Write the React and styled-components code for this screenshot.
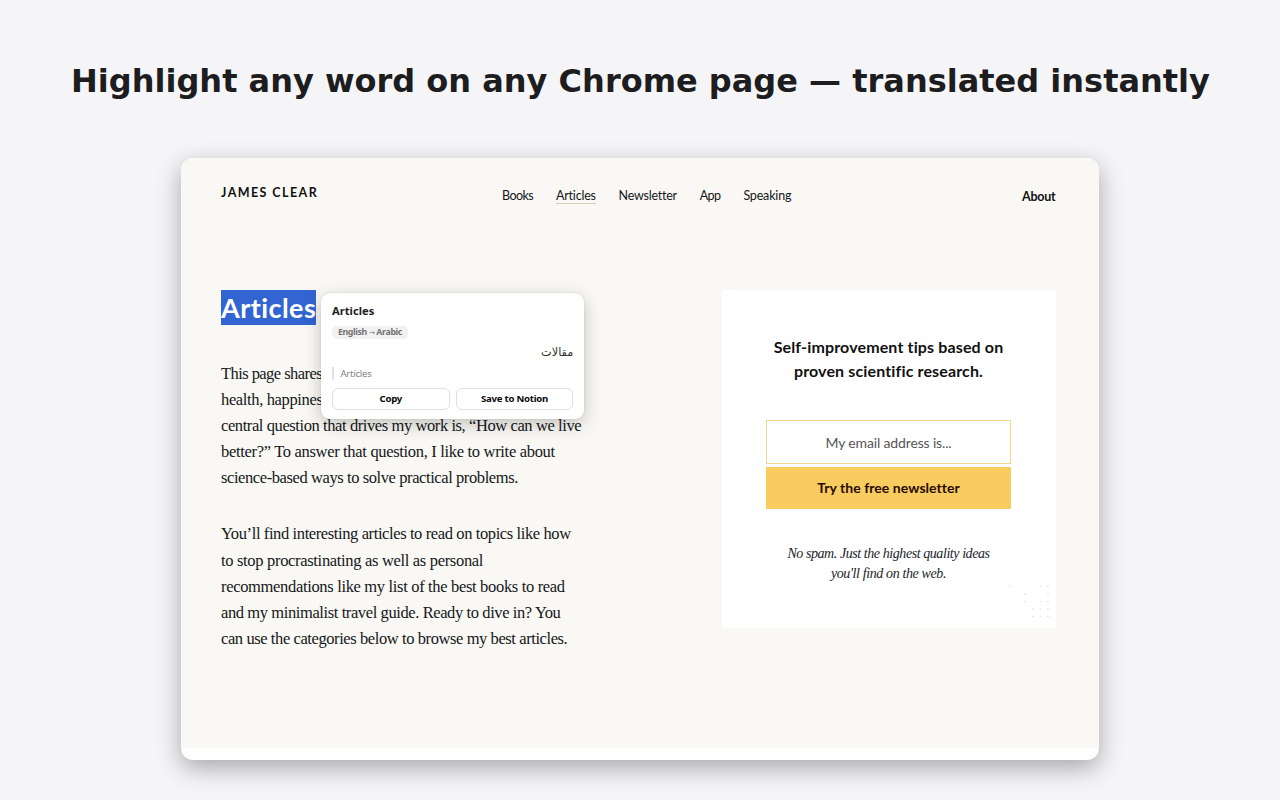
import React from "react";
import styled, { createGlobalStyle } from "styled-components";

const sans = `Lato, "Open Sans", sans-serif`;
const serif = `"Liberation Serif", serif`;
const ui = `"Noto Sans", "DejaVu Sans", sans-serif`;

const GlobalStyle = createGlobalStyle`
  * { box-sizing: border-box; }
  body { margin: 0; background: #f5f5f8; }
  h1, h2, p { margin: 0; }
`;

const Page = styled.main`
  height: 800px;
  overflow: hidden;
  display: flex;
  flex-direction: column;
  align-items: center;
`;

const Headline = styled.h1`
  height: 158px;
  padding: 63px 0 0 1px;
  font: 700 32px/37px "DejaVu Sans", sans-serif;
  color: #1d1d1f;
  white-space: nowrap;
`;

const Window = styled.section`
  width: 918px;
  height: 602px;
  flex: none;
  display: flex;
  flex-direction: column;
  border-radius: 12px;
  overflow: hidden;
  background: #fff;
  box-shadow: 0 8px 24px rgba(0, 0, 0, 0.32);
`;

const Site = styled.div`
  height: 590px;
  padding: 0 43px 0 40px;
  background: #f9f8f4;
  color: #15171a;
`;

const Header = styled.header`
  height: 132px;
  padding-top: 26px;
  display: grid;
  grid-template-columns: 281px 1fr auto;
  align-items: start;
  font-family: ${sans};
`;

const Logo = styled.div`
  font-size: 12.5px;
  line-height: 18px;
  font-weight: 700;
  letter-spacing: 1.42px;
  color: #111;
`;

const Nav = styled.nav`
  display: flex;
  gap: 22.8px;
  padding-top: 3px;
`;

const NavLink = styled.a`
  height: 16px;
  font-size: 12.5px;
  line-height: 18px;
  letter-spacing: ${(p) => p.$spacing}px;
  box-shadow: ${(p) => (p.$active ? "0 1px 0 #cfcebd" : "none")};
`;

const About = styled.a`
  padding: 4px 0.5px 0 0;
  font-size: 12.5px;
  line-height: 18px;
  font-weight: 700;
  letter-spacing: -0.25px;
  color: #111;
`;

const Columns = styled.div`
  display: flex;
  justify-content: space-between;
  align-items: flex-start;
`;

const Article = styled.article`
  position: relative;
  width: 370px;
`;

const Title = styled.h2`
  width: fit-content;
  height: 35px;
  margin-bottom: 35.6px;
  font: 700 27px/35px ${sans};
  letter-spacing: 0.45px;
  color: #fff;
  background: #3265d2;
`;

const Paragraph = styled.p`
  margin-bottom: 30px;
  font: 400 16.5px/26.15px ${serif};
`;

const Line = styled.span`
  display: block;
  white-space: nowrap;
  letter-spacing: ${(p) => p.$spacing}px;
`;

const Popup = styled.aside`
  position: absolute;
  top: 3px;
  left: 100.4px;
  width: 262.5px;
  height: 125.5px;
  padding: 9px 10.5px 9px 10.6px;
  border-radius: 9px;
  background: #fff;
  box-shadow: 0 5px 18px rgba(0, 0, 0, 0.22), 0 0 2px rgba(0, 0, 0, 0.12);
  font-family: ${ui};
`;

const Word = styled.div`
  height: 24px;
  font-size: 11.2px;
  line-height: 17px;
  font-weight: 700;
  color: #1d1d1f;
`;

const Chip = styled.div`
  width: 76px;
  height: 13px;
  border-radius: 5px;
  background: #f1f1f2;
  color: #747474;
  font-size: 8.8px;
  line-height: 13px;
  font-weight: 700;
  letter-spacing: -0.36px;
  text-align: center;
  white-space: nowrap;
`;

const Arrow = styled.span`
  font-size: 7px;
  font-family: "DejaVu Sans", sans-serif;
  font-weight: 400;
`;

const Translation = styled.div`
  height: 28px;
  font: 400 11.3px/27px "DejaVu Sans", sans-serif;
  color: #333;
`;

const Quote = styled.div`
  height: 13px;
  margin-bottom: 8px;
  padding-left: 6.4px;
  border-left: 2px solid #e1e1e4;
  font-size: 9.6px;
  line-height: 13px;
  letter-spacing: -0.25px;
  color: #858585;
`;

const Actions = styled.div`
  display: grid;
  grid-template-columns: 1fr 1fr;
  gap: 6px;
`;

const Action = styled.button`
  height: 21.5px;
  padding: 0;
  border: 1px solid #e0e0e3;
  border-radius: 6px;
  background: #fff;
  font: 700 9.6px/19px ${ui};
  letter-spacing: -0.25px;
  color: #080808;
`;

const Signup = styled.form`
  width: 334px;
  height: 338px;
  position: relative;
  display: flex;
  flex-direction: column;
  align-items: center;
  padding: 45px 1px 0 0;
  border-radius: 3px;
  background: #fff;
  text-align: center;
`;

const SignupTitle = styled.h2`
  height: 85px;
  font: 700 16px/24px ${sans};
  letter-spacing: 0.14px;
  color: #111;
`;

const EmailInput = styled.input`
  width: 245px;
  height: 44px;
  margin-bottom: 3px;
  padding: 1px 0 0;
  border: 1px solid #f8d68a;
  border-radius: 0;
  background: #fff;
  font: 400 14px/20px ${sans};
  letter-spacing: -0.15px;
  text-align: center;
  &::placeholder { color: #565656; opacity: 1; }
`;

const Submit = styled.button`
  width: 245px;
  height: 42px;
  padding: 0;
  border: 0;
  background: #f8cc5e;
  font: 700 14px/40px ${sans};
  letter-spacing: 0.05px;
  color: #280a00;
`;

const Note = styled.p`
  margin-top: 34.6px;
  font: italic 400 14px/20.5px ${serif};
  color: #22242a;
`;

const Dots = styled.svg`
  position: absolute;
  right: 0;
  bottom: 0;
`;

const nav = [
  ["Books", -0.55],
  ["Articles", -0.2],
  ["Newsletter", -0.24],
  ["App", -0.5],
  ["Speaking", -0.18],
];

const paragraphs = [
  [
    ["This page shares", -0.56],
    ["health, happiness", -0.36],
    ["central question that drives my work is, “How can we live", -0.41],
    ["better?” To answer that question, I like to write about", -0.32],
    ["science-based ways to solve practical problems.", -0.41],
  ],
  [
    ["You’ll find interesting articles to read on topics like how", -0.39],
    ["to stop procrastinating as well as personal", -0.32],
    ["recommendations like my list of the best books to read", -0.33],
    ["and my minimalist travel guide. Ready to dive in? You", -0.4],
    ["can use the categories below to browse my best articles.", -0.41],
  ],
];

const dots = [
  [8, 8], [38.5, 8], [46, 8], [23, 16], [46, 16], [23, 23.5], [38.5, 23.5],
  [46, 23.5], [31, 31], [38.5, 31], [46, 31], [31, 38.5], [38.5, 38.5], [46, 38.5],
];

export default function App() {
  return (
    <Page>
      <GlobalStyle />
      <Headline>Highlight any word on any Chrome page — translated instantly</Headline>
      <Window>
        <Site>
          <Header>
            <Logo>JAMES CLEAR</Logo>
            <Nav>
              {nav.map(([label, spacing]) => (
                <NavLink key={label} $spacing={spacing} $active={label === "Articles"}>{label}</NavLink>
              ))}
            </Nav>
            <About>About</About>
          </Header>
          <Columns>
            <Article>
              <Title>Articles</Title>
              {paragraphs.map((lines, i) => (
                <Paragraph key={i}>
                  {lines.map(([text, spacing]) => (
                    <Line key={text} $spacing={spacing}>{text}</Line>
                  ))}
                </Paragraph>
              ))}
              <Popup>
                <Word>Articles</Word>
                <Chip>English <Arrow>→</Arrow> Arabic</Chip>
                <Translation dir="rtl" lang="ar">مقالات</Translation>
                <Quote>Articles</Quote>
                <Actions>
                  <Action type="button">Copy</Action>
                  <Action type="button">Save to Notion</Action>
                </Actions>
              </Popup>
            </Article>
            <Signup>
              <SignupTitle>Self-improvement tips based on<br />proven scientific research.</SignupTitle>
              <EmailInput placeholder="My email address is..." />
              <Submit type="button">Try the free newsletter</Submit>
              <Note>
                <Line $spacing={-0.43}>No spam. Just the highest quality ideas</Line>
                <Line $spacing={-0.38}>you'll find on the web.</Line>
              </Note>
              <Dots width="54" height="50" viewBox="0 0 54 50" fill="#dedede">
                {dots.map(([x, y]) => <circle key={`${x}-${y}`} cx={x} cy={y} r="0.8" />)}
              </Dots>
            </Signup>
          </Columns>
        </Site>
      </Window>
    </Page>
  );
}
